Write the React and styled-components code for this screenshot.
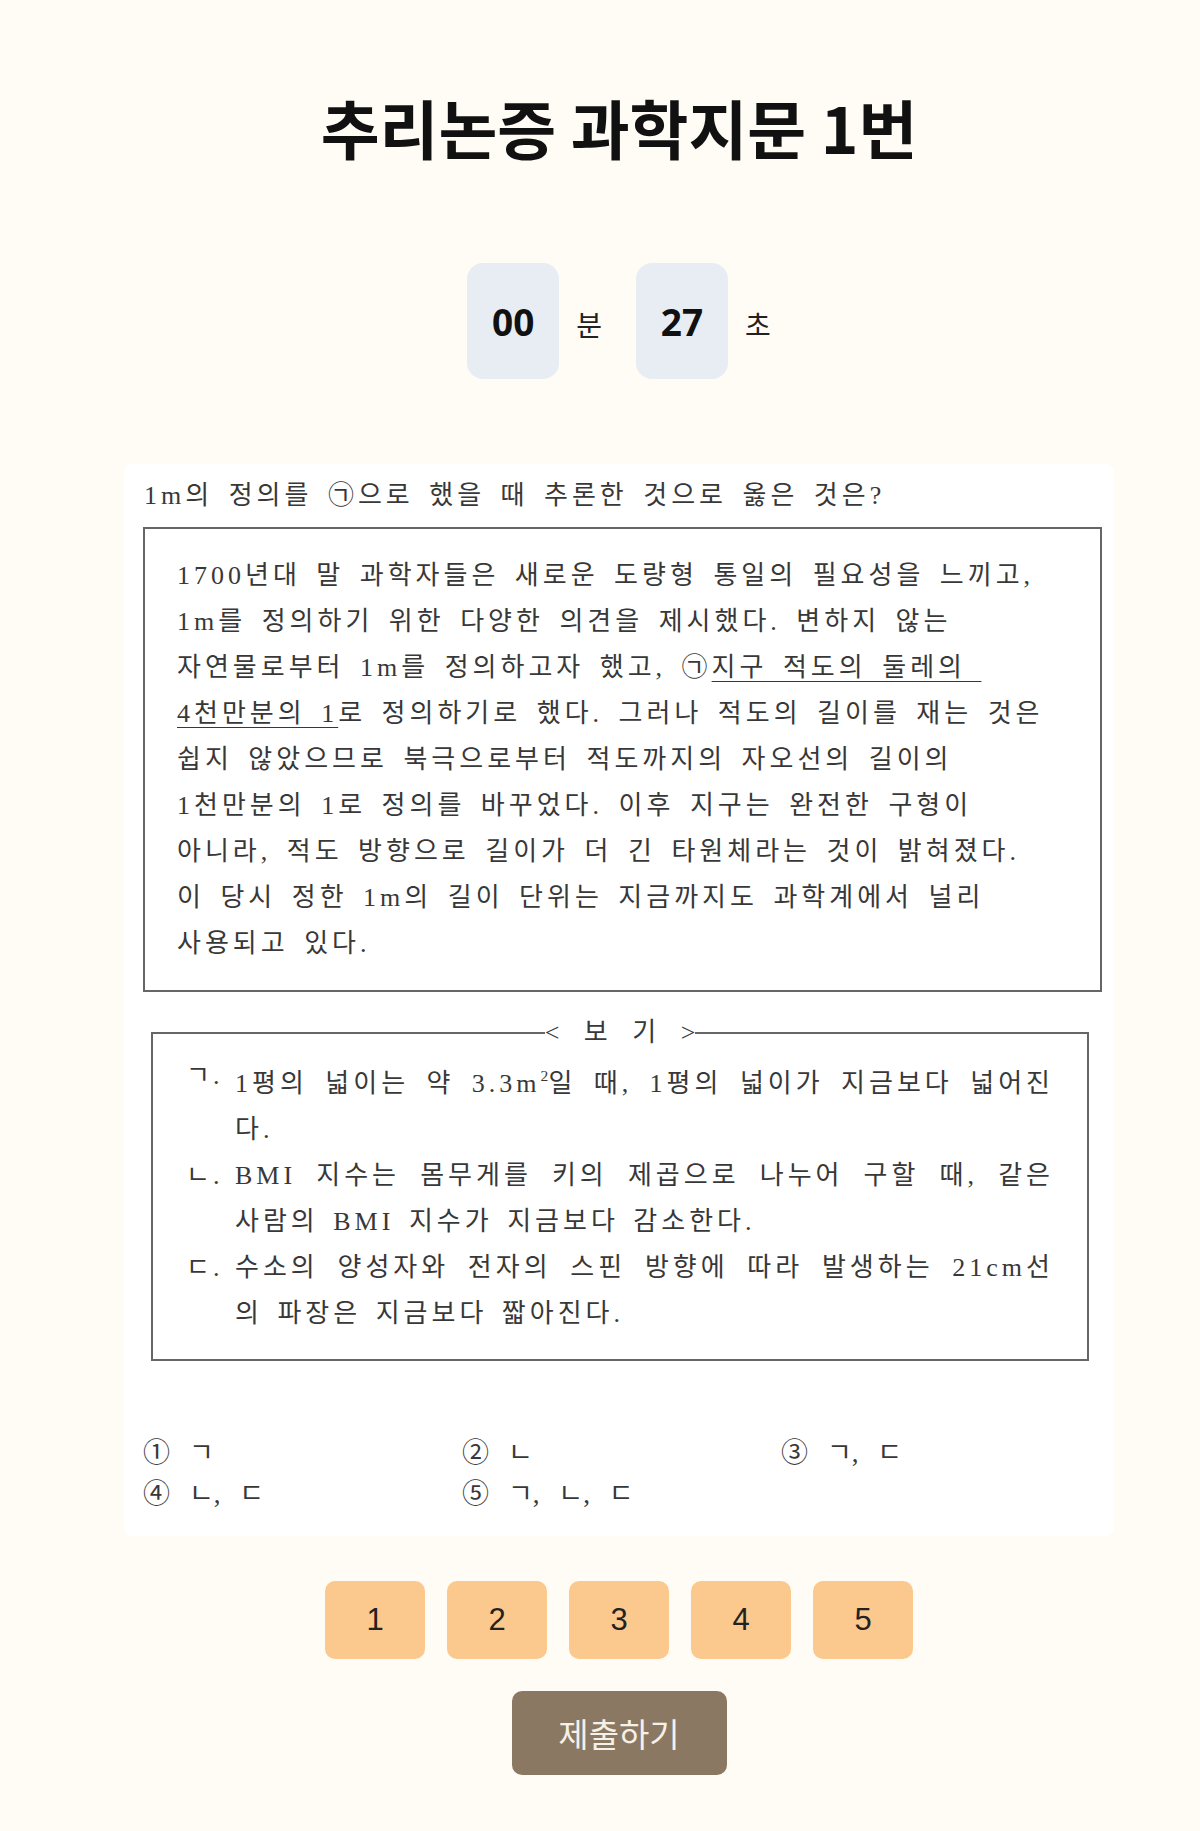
import React from "react";
import styled, { createGlobalStyle, css } from "styled-components";

const GlobalStyle = createGlobalStyle`
  html, body {
    margin: 0;
    padding: 0;
    background: #fffcf5;
  }
  body {
    font-family: "Noto Sans CJK KR", "Noto Sans", sans-serif;
    color: #111;
  }
  * {
    box-sizing: border-box;
  }
`;

const Page = styled.div`
  display: flex;
  flex-direction: column;
  align-items: center;
  min-height: 1831px;
  padding: 88px 0 56px 38px;
`;

const Title = styled.h1`
  margin: 0;
  font-size: 64px;
  line-height: 76px;
  font-weight: 700;
  color: #111;
`;

const Timer = styled.div`
  display: flex;
  align-items: baseline;
  gap: 34px;
  margin-top: 99px;
`;

const TimeUnit = styled.div`
  display: flex;
  align-items: baseline;
  gap: 17px;
`;

const TimeBox = styled.div`
  width: 92px;
  height: 116px;
  border-radius: 16px;
  background: #e8edf4;
  display: flex;
  align-items: center;
  justify-content: center;
  font-family: "Noto Sans", "Open Sans", sans-serif;
  font-weight: 700;
  font-size: 37px;
  color: #111;
`;

const TimeLabel = styled.span`
  font-size: 28px;
  color: #222;
`;

const Card = styled.section`
  width: 990px;
  margin-top: 85px;
  background: #fff;
  border-radius: 8px;
  padding: 14px 12px 21px 19px;
  font-family: "Liberation Serif", "Noto Sans CJK KR", serif;
  font-size: 26px;
  color: #383838;
`;

const Question = styled.p`
  margin: 0;
  padding-left: 1px;
  line-height: 36px;
  letter-spacing: 4px;
  word-spacing: 5px;
  white-space: nowrap;
`;

const Passage = styled.div`
  margin-top: 13px;
  border: 2px solid #666;
  padding: 24px 20px 23px 32px;
  line-height: 46px;
  letter-spacing: 4px;
  word-spacing: 5px;
`;

const Line = styled.span`
  display: block;
  white-space: nowrap;
`;

const Under = styled.span`
  text-decoration: underline;
  text-decoration-thickness: 1px;
  text-underline-offset: 5px;
`;

const Bogi = styled.fieldset`
  margin: 26px 13px 0 8px;
  min-width: 0;
  border: 2px solid #666;
  padding: 5px 33px 22px 33px;
`;

const BogiTitle = styled.legend`
  margin: 0 auto;
  padding: 0;
  line-height: 30px;
  word-spacing: 18px;
`;

const Item = styled.div`
  display: grid;
  grid-template-columns: 49px 1fr;
  line-height: 46px;
  letter-spacing: 4px;
  word-spacing: 4px;
`;

const Marker = styled.span`
  white-space: nowrap;
  letter-spacing: 3px;
`;

const ItemLine = styled.span`
  display: block;
  white-space: nowrap;
  ${(p) =>
    p.$full &&
    css`
      text-align: justify;
      text-align-last: justify;
    `}
`;

const Sup = styled.span`
  font-size: 0.6em;
  vertical-align: 0.7em;
  letter-spacing: 0;
`;

const Choices = styled.div`
  display: grid;
  grid-template-columns: repeat(3, 319px);
  margin-top: 72px;
  font-size: 27px;
  line-height: 41px;
`;

const Choice = styled.div`
  display: flex;
  gap: 19px;
  word-spacing: 12px;
`;

const NumberRow = styled.div`
  display: flex;
  gap: 22px;
  margin-top: 45px;
`;

const NumButton = styled.button`
  width: 100px;
  height: 78px;
  border: none;
  border-radius: 10px;
  background: #fbc98e;
  color: #222;
  font-family: "Liberation Sans", Arial, sans-serif;
  font-size: 31px;
  cursor: pointer;
`;

const Submit = styled.button`
  width: 215px;
  height: 84px;
  margin-top: 32px;
  border: none;
  border-radius: 10px;
  background: #8b7862;
  color: #f5f0e8;
  font-family: "Noto Sans CJK KR", sans-serif;
  font-size: 33px;
  cursor: pointer;
`;

const bogiItems = [
  {
    mark: "ㄱ.",
    lines: [
      <>
        1평의 넓이는 약 3.3m<Sup>2</Sup>일 때, 1평의 넓이가 지금보다 넓어진
      </>,
      "다.",
    ],
  },
  {
    mark: "ㄴ.",
    lines: [
      "BMI 지수는 몸무게를 키의 제곱으로 나누어 구할 때, 같은",
      "사람의 BMI 지수가 지금보다 감소한다.",
    ],
  },
  {
    mark: "ㄷ.",
    lines: [
      "수소의 양성자와 전자의 스핀 방향에 따라 발생하는 21cm선",
      "의 파장은 지금보다 짧아진다.",
    ],
  },
];

const choices = [
  ["①", "ㄱ"],
  ["②", "ㄴ"],
  ["③", "ㄱ, ㄷ"],
  ["④", "ㄴ, ㄷ"],
  ["⑤", "ㄱ, ㄴ, ㄷ"],
];

export default function App() {
  return (
    <>
      <GlobalStyle />
      <Page>
        <Title>추리논증 과학지문 1번</Title>

        <Timer>
          <TimeUnit>
            <TimeBox>00</TimeBox>
            <TimeLabel>분</TimeLabel>
          </TimeUnit>
          <TimeUnit>
            <TimeBox>27</TimeBox>
            <TimeLabel>초</TimeLabel>
          </TimeUnit>
        </Timer>

        <Card>
          <Question>1m의 정의를 ㉠으로 했을 때 추론한 것으로 옳은 것은?</Question>
          <Passage>
            <Line>1700년대 말 과학자들은 새로운 도량형 통일의 필요성을 느끼고,</Line>
            <Line>1m를 정의하기 위한 다양한 의견을 제시했다. 변하지 않는</Line>
            <Line>
              자연물로부터 1m를 정의하고자 했고, ㉠<Under>지구 적도의 둘레의&nbsp;</Under>
            </Line>
            <Line>
              <Under>4천만분의 1</Under>로 정의하기로 했다. 그러나 적도의 길이를 재는 것은
            </Line>
            <Line>쉽지 않았으므로 북극으로부터 적도까지의 자오선의 길이의</Line>
            <Line>1천만분의 1로 정의를 바꾸었다. 이후 지구는 완전한 구형이</Line>
            <Line>아니라, 적도 방향으로 길이가 더 긴 타원체라는 것이 밝혀졌다.</Line>
            <Line>이 당시 정한 1m의 길이 단위는 지금까지도 과학계에서 널리</Line>
            <Line>사용되고 있다.</Line>
          </Passage>

          <Bogi>
            <BogiTitle>&lt; 보 기 &gt;</BogiTitle>
            {bogiItems.map((item) => (
              <Item key={item.mark}>
                <Marker>{item.mark}</Marker>
                <div>
                  {item.lines.map((line, i) => (
                    <ItemLine key={i} $full={i < item.lines.length - 1}>
                      {line}
                    </ItemLine>
                  ))}
                </div>
              </Item>
            ))}
          </Bogi>

          <Choices>
            {choices.map(([num, text]) => (
              <Choice key={num}>
                <span>{num}</span>
                <span>{text}</span>
              </Choice>
            ))}
          </Choices>
        </Card>

        <NumberRow>
          {[1, 2, 3, 4, 5].map((n) => (
            <NumButton key={n}>{n}</NumButton>
          ))}
        </NumberRow>

        <Submit>제출하기</Submit>
      </Page>
    </>
  );
}
